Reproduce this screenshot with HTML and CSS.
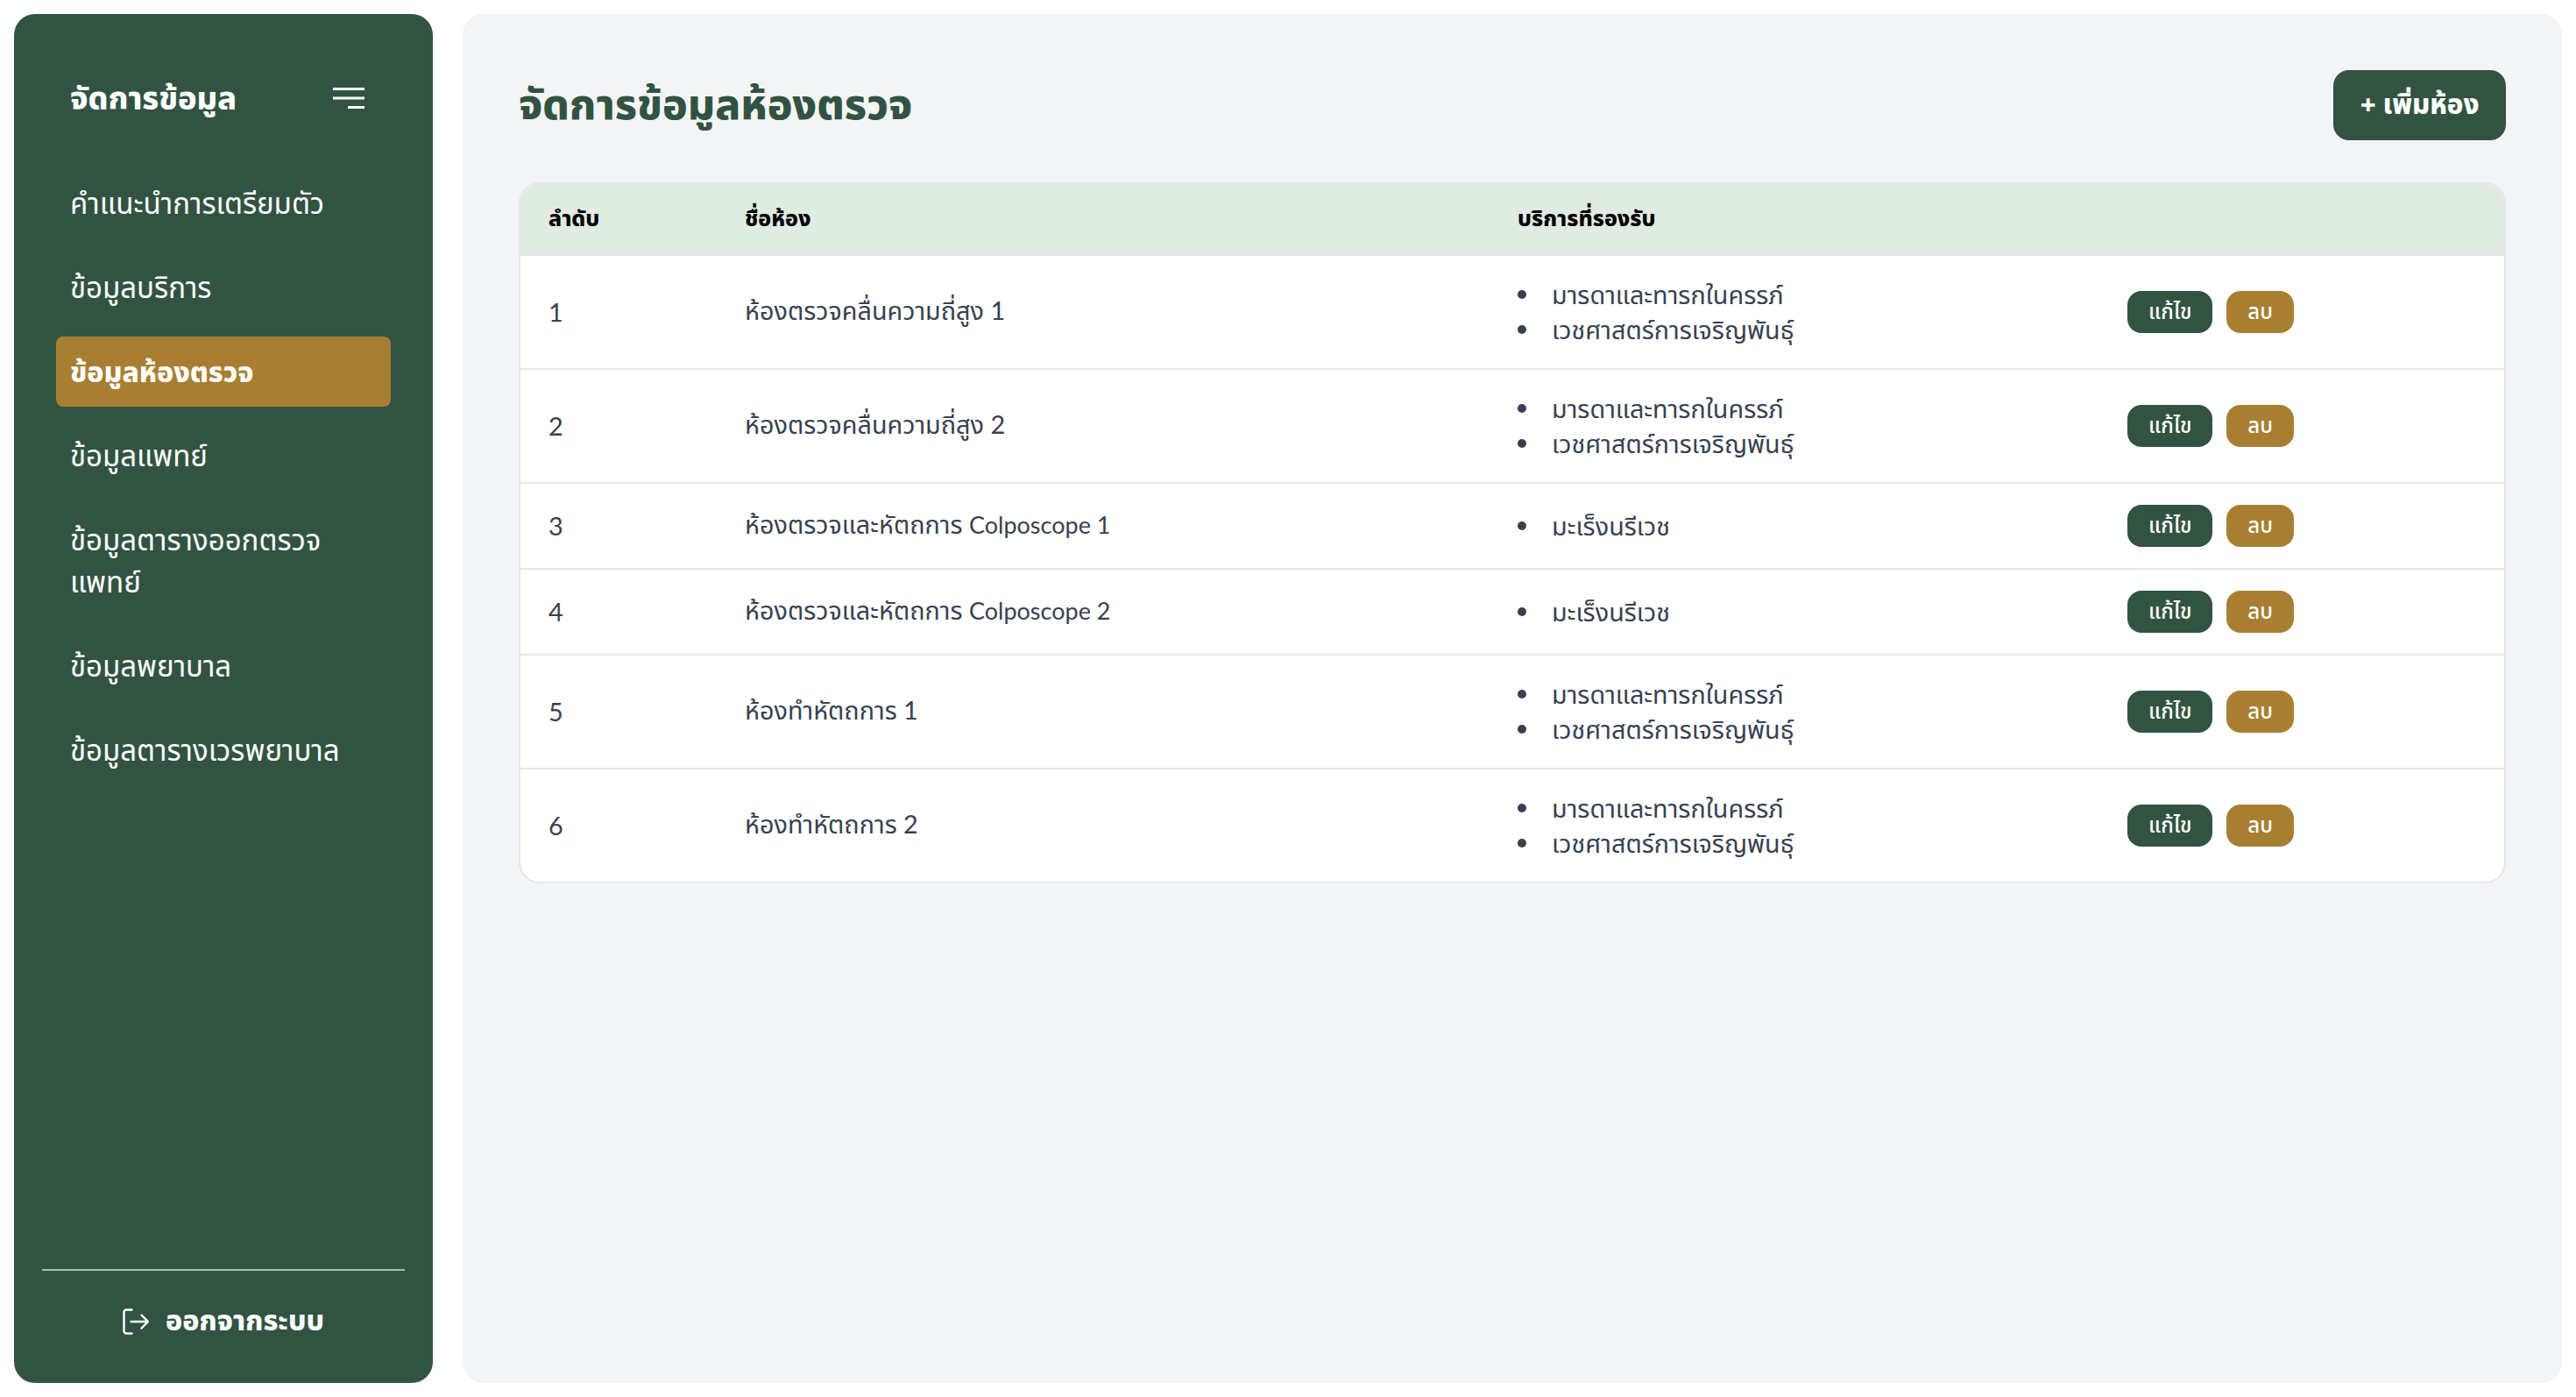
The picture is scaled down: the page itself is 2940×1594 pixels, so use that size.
FILE: index.html
```html
<!DOCTYPE html>
<html lang="th">
<head>
    <meta charset="UTF-8">
    <title>จัดการข้อมูลห้องตรวจ</title>
    <link rel="stylesheet" href="styles.css">
</head>
<body>
    <div class="app">
        <aside class="sidebar">
            <div class="sidebar-header">
                <span class="sidebar-title">จัดการข้อมูล</span>
                <svg class="menu-icon" width="36" height="24" viewBox="0 0 36 24" fill="none" stroke="#fff" stroke-width="3"><path d="M0 1.5h36M0 12h36M17 22.5h19"/></svg>
            </div>
            <nav class="nav">
                <a class="nav-item">คำแนะนำการเตรียมตัว</a>
                <a class="nav-item">ข้อมูลบริการ</a>
                <a class="nav-item active">ข้อมูลห้องตรวจ</a>
                <a class="nav-item">ข้อมูลแพทย์</a>
                <a class="nav-item">ข้อมูลตารางออกตรวจแพทย์</a>
                <a class="nav-item">ข้อมูลพยาบาล</a>
                <a class="nav-item">ข้อมูลตารางเวรพยาบาล</a>
            </nav>
            <div class="sidebar-footer">
                <svg width="30" height="30" viewBox="0 0 30 30" fill="none" stroke="#fff" stroke-width="2.4" stroke-linecap="round" stroke-linejoin="round"><path d="M10.5 1.5H4a2.5 2.5 0 0 0-2.5 2.5v22A2.5 2.5 0 0 0 4 28.500H10.500M9.500 15h19.500M21.500 7.500l7.500 7.500-7.500 7.500"/></svg>
                <span>ออกจากระบบ</span>
            </div>
        </aside>
        <main class="content">
            <div class="content-header">
                <h1>จัดการข้อมูลห้องตรวจ</h1>
                <button class="add-button">+ เพิ่มห้อง</button>
            </div>
            <div class="table-card">
                <table>
                    <thead>
                        <tr><th class="col-no">ลำดับ</th><th class="col-name">ชื่อห้อง</th><th class="col-service">บริการที่รองรับ</th><th></th></tr>
                    </thead>
                    <tbody>
                        <tr><td>1</td><td>ห้องตรวจคลื่นความถี่สูง 1</td><td><ul><li>มารดาและทารกในครรภ์</li><li>เวชศาสตร์การเจริญพันธุ์</li></ul></td><td><button class="btn edit">แก้ไข</button><button class="btn del">ลบ</button></td></tr>
                        <tr><td>2</td><td>ห้องตรวจคลื่นความถี่สูง 2</td><td><ul><li>มารดาและทารกในครรภ์</li><li>เวชศาสตร์การเจริญพันธุ์</li></ul></td><td><button class="btn edit">แก้ไข</button><button class="btn del">ลบ</button></td></tr>
                        <tr><td>3</td><td>ห้องตรวจและหัตถการ <span class="en">Colposcope 1</span></td><td><ul><li>มะเร็งนรีเวช</li></ul></td><td><button class="btn edit">แก้ไข</button><button class="btn del">ลบ</button></td></tr>
                        <tr><td>4</td><td>ห้องตรวจและหัตถการ <span class="en">Colposcope 2</span></td><td><ul><li>มะเร็งนรีเวช</li></ul></td><td><button class="btn edit">แก้ไข</button><button class="btn del">ลบ</button></td></tr>
                        <tr><td>5</td><td>ห้องทำหัตถการ 1</td><td><ul><li>มารดาและทารกในครรภ์</li><li>เวชศาสตร์การเจริญพันธุ์</li></ul></td><td><button class="btn edit">แก้ไข</button><button class="btn del">ลบ</button></td></tr>
                        <tr><td>6</td><td>ห้องทำหัตถการ 2</td><td><ul><li>มารดาและทารกในครรภ์</li><li>เวชศาสตร์การเจริญพันธุ์</li></ul></td><td><button class="btn edit">แก้ไข</button><button class="btn del">ลบ</button></td></tr>
                    </tbody>
                </table>
            </div>
        </main>
    </div>
</body>
</html>
```

FILE: styles.css
```css
body, html {
    height: 100%;
    margin: 0;
    font-family: "Noto Sans", "Noto Sans Thai", "Liberation Sans", sans-serif;
    background-color: #fff;
}
.app {
    display: flex;
    gap: 34px;
    height: 100%;
    box-sizing: border-box;
    padding: 16px;
}
.sidebar {
    width: 478px;
    flex-shrink: 0;
    background-color: #325342;
    border-radius: 24px;
    color: #fff;
    display: flex;
    flex-direction: column;
    box-sizing: border-box;
    padding: 64px 32px 46px;
}
.sidebar-header {
    display: flex;
    justify-content: space-between;
    align-items: center;
    height: 64px;
    padding: 0 46px 0 32px;
    margin-bottom: 48px;
}
.sidebar-title {
    font-size: 36px;
    font-weight: 800;
    padding-top: 3px;
}
.nav {
    display: flex;
    flex-direction: column;
    gap: 16px;
    flex-grow: 1;
    padding: 0 16px;
}
.nav-item {
    font-size: 33px;
    line-height: 48px;
    padding: 16px;
    border-radius: 8px;
}
.nav-item.active {
    background-color: #a87f32;
    font-size: 32px;
    font-weight: 800;
}
.sidebar-footer {
    border-top: 2px solid #9cc5a8;
    padding-top: 34px;
    height: 48px;
    display: flex;
    justify-content: center;
    align-items: center;
    gap: 19px;
    font-size: 32px;
    font-weight: 800;
}
.content {
    flex-grow: 1;
    background-color: #f3f4f6;
    border-radius: 24px;
    box-sizing: border-box;
    padding: 64px;
}
.content-header {
    display: flex;
    justify-content: space-between;
    align-items: center;
    margin-bottom: 48px;
}
h1 {
    margin: 0;
    padding-top: 2px;
    font-size: 48px;
    font-weight: 800;
    color: #325342;
}
.add-button {
    font-family: inherit;
    font-size: 31px;
    font-weight: 800;
    color: #fff;
    background-color: #325342;
    border: none;
    border-radius: 18px;
    height: 80px;
    width: 197px;
    padding: 0;
}
.table-card {
    background-color: #fff;
    border: 2px solid #e5e7eb;
    border-radius: 24px;
    overflow: hidden;
}
table {
    width: 100%;
    border-collapse: collapse;
    font-family: Lato, "Noto Sans Thai", sans-serif;
    font-size: 28.8px;
    color: #374151;
}
th {
    background-color: #e0ece2;
    color: #000;
    font-family: "Noto Sans", "Noto Sans Thai", sans-serif;
    font-size: 25px;
    font-weight: 800;
    text-align: left;
    height: 80px;
    padding: 0 32px;
}
td {
    padding: 24px 32px;
    border-top: 2px solid #e5e7eb;
}
.en {
    font-size: 27px;
}
.col-no { width: 160px; }
.col-name { width: 818px; }
.col-service { width: 632px; }
ul {
    margin: 0;
    padding: 0;
    list-style: none;
}
li {
    display: flex;
    align-items: center;
    gap: 29px;
    line-height: 40px;
}
li::before {
    content: "";
    width: 10px;
    height: 10px;
    border-radius: 50%;
    background-color: #374151;
}
.btn {
    font-family: "Noto Sans", "Noto Sans Thai", sans-serif;
    font-size: 24px;
    font-weight: 500;
    color: #fff;
    border: none;
    border-radius: 16px;
    height: 48px;
    padding: 0 24px;
    margin-right: 16px;
}
.edit { background-color: #325342; }
.del { background-color: #a87f32; }
```
